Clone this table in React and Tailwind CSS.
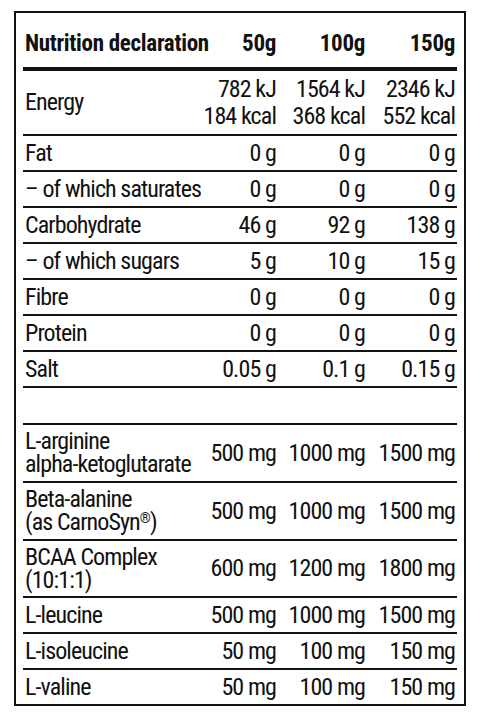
import React from "react";

const rows = [
  { label: "Fat", v: ["0 g", "0 g", "0 g"] },
  { label: "– of which saturates", v: ["0 g", "0 g", "0 g"] },
  { label: "Carbohydrate", v: ["46 g", "92 g", "138 g"] },
  { label: "– of which sugars", v: ["5 g", "10 g", "15 g"] },
  { label: "Fibre", v: ["0 g", "0 g", "0 g"] },
  { label: "Protein", v: ["0 g", "0 g", "0 g"] },
  { label: "Salt", v: ["0.05 g", "0.1 g", "0.15 g"] },
];

const grid = "grid grid-cols-[minmax(0,1fr)_88px_89px_90px] items-center";

function Values({ v }) {
  return v.map((x, i) => (
    <div key={i} className="text-right pr-[2px] whitespace-nowrap">
      {x}
    </div>
  ));
}

export default function App() {
  return (
    <div className="w-[480px] h-[715px] bg-white pt-[11px] pl-[14px] text-[#111] font-['Roboto_Condensed',_'Liberation_Sans_Narrow',_sans-serif] text-[24px] font-normal tracking-[-0.9px] leading-[27px]">
      <div className="w-[452px] h-[695px] border-2 border-[#111] px-[7px] flex flex-col">
        <div className={`${grid} h-[58px] pt-[6px] border-b-4 border-[#111] font-bold text-[23px] tracking-[-0.3px]`}>
          <div className="pl-[2px] whitespace-nowrap">Nutrition declaration</div>
          <Values v={["50g", "100g", "150g"]} />
        </div>
        <div className={`${grid} h-[65px] border-b-2 border-[#111]`}>
          <div className="pl-[2px]">Energy</div>
          <Values v={[["782 kJ", "184 kcal"], ["1564 kJ", "368 kcal"], ["2346 kJ", "552 kcal"]].map((p, i) => (
            <React.Fragment key={i}>
              <span className="block">{p[0]}</span>
              <span className="block">{p[1]}</span>
            </React.Fragment>
          ))} />
        </div>
        {rows.map((r) => (
          <div key={r.label} className={`${grid} h-[36px] border-b-2 border-[#111]`}>
            <div className="pl-[2px] whitespace-nowrap">{r.label}</div>
            <Values v={r.v} />
          </div>
        ))}
        <div className="h-[37px] border-b-2 border-[#111]" />
        <div className={`${grid} h-[58px] border-b-2 border-[#111]`}>
          <div className="pl-[2px] leading-[23px] whitespace-nowrap">
            L-arginine
            <br />
            alpha-ketoglutarate
          </div>
          <Values v={["500 mg", "1000 mg", "1500 mg"]} />
        </div>
        <div className={`${grid} h-[58px] border-b-2 border-[#111]`}>
          <div className="pl-[2px] leading-[23px] whitespace-nowrap">
            Beta-alanine
            <br />
            (as CarnoSyn<span className="text-[14px] align-[7px] leading-none">®</span>)
          </div>
          <Values v={["500 mg", "1000 mg", "1500 mg"]} />
        </div>
        <div className={`${grid} h-[57px] border-b-2 border-[#111]`}>
          <div className="pl-[2px] leading-[23px] whitespace-nowrap">
            BCAA Complex
            <br />
            (10:1:1)
          </div>
          <Values v={["600 mg", "1200 mg", "1800 mg"]} />
        </div>
        <div className={`${grid} h-[36px] border-b-2 border-[#111]`}>
          <div className="pl-[2px]">L-leucine</div>
          <Values v={["500 mg", "1000 mg", "1500 mg"]} />
        </div>
        <div className={`${grid} h-[36px] border-b-2 border-[#111]`}>
          <div className="pl-[2px]">L-isoleucine</div>
          <Values v={["50 mg", "100 mg", "150 mg"]} />
        </div>
        <div className={`${grid} h-[34px]`}>
          <div className="pl-[2px]">L-valine</div>
          <Values v={["50 mg", "100 mg", "150 mg"]} />
        </div>
      </div>
    </div>
  );
}
